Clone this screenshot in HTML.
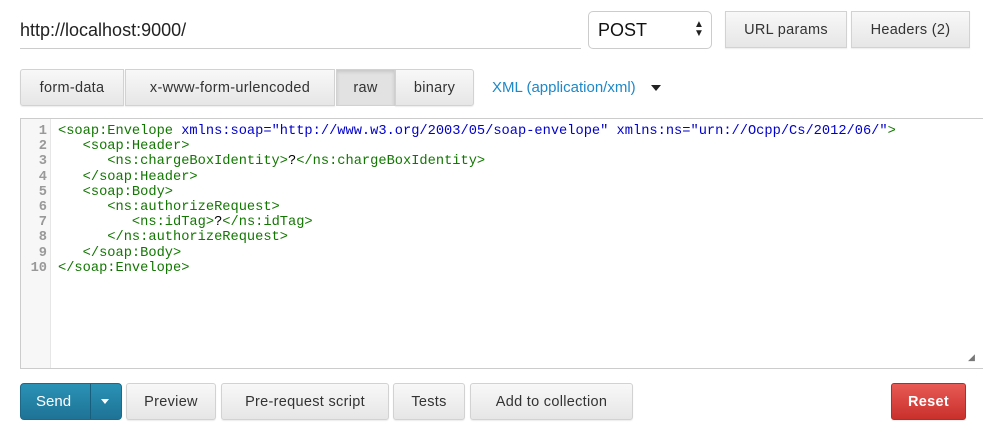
<!DOCTYPE html>
<html><head><meta charset="utf-8"><style>
*{box-sizing:border-box}
body{margin:0;width:983px;height:431px;background:#fff;font-family:"Liberation Sans",sans-serif;position:relative;overflow:hidden}
.a{position:absolute}
.btn{position:absolute;background:linear-gradient(#f8f8f8,#e6e6e6);border:1px solid #d2d2d2;border-radius:3px;color:#333;font-size:14.5px;display:flex;align-items:center;justify-content:center;letter-spacing:0.3px;box-shadow:0 1px 1px rgba(0,0,0,.08)}
.code{position:absolute;left:58px;top:124px;font-family:"Liberation Mono",monospace;font-size:13.7px;line-height:15.2px;white-space:pre;color:#170}
.g{position:absolute;left:20px;width:31px;top:124px;font-family:"Liberation Mono",monospace;font-size:13.7px;line-height:15.2px;color:#999;font-weight:bold;text-align:right;padding-right:4px;white-space:pre}
.b{color:#00c}.k{color:#000}
</style></head><body>
<div class="a" style="left:20px;top:20px;font-size:18px;color:#222">http://localhost:9000/</div>
<div class="a" style="left:20px;top:48px;width:561px;height:1px;background:#ccc"></div>
<div class="a" style="left:588px;top:11px;width:124px;height:38px;border:1px solid #ccc;border-radius:5px"></div>
<div class="a" style="left:598px;top:20px;font-size:18px;color:#111">POST</div>
<div class="a" style="left:694px;top:20px;font-size:10px;line-height:9px;color:#222">▲<br>▼</div>
<div class="btn" style="left:725px;top:11px;width:122px;height:37px;border-radius:0">URL params</div>
<div class="btn" style="left:851px;top:11px;width:119px;height:37px;border-radius:0">Headers (2)</div>

<div class="btn" style="left:20px;top:69px;width:104px;height:37px;border-radius:3px 0 0 3px">form-data</div>
<div class="btn" style="left:125px;top:69px;width:210px;height:37px;border-radius:0">x-www-form-urlencoded</div>
<div class="btn" style="left:336px;top:69px;width:59px;height:37px;border-radius:0;background:#e2e2e2;box-shadow:inset 0 2px 3px rgba(0,0,0,.12)">raw</div>
<div class="btn" style="left:395px;top:69px;width:79px;height:37px;border-radius:0 3px 3px 0">binary</div>
<div class="a" style="left:492px;top:79px;font-size:15px;color:#1e88c8">XML (application/xml)</div>
<div class="a" style="left:651px;top:85px;width:0;height:0;border-left:5px solid transparent;border-right:5px solid transparent;border-top:6px solid #222"></div>

<div class="a" style="left:20px;top:118px;width:963px;height:251px;border:1px solid #ccc;border-right:none"></div>
<div class="a" style="left:21px;top:119px;width:30px;height:249px;background:#f7f7f7;border-right:1px solid #e6e6e6"></div>
<div class="g">1
2
3
4
5
6
7
8
9
10</div>
<div class="code">&lt;soap:Envelope <span class="b">xmlns:soap="http://www.w3.org/2003/05/soap-envelope" xmlns:ns="urn://Ocpp/Cs/2012/06/"</span>&gt;
   &lt;soap:Header&gt;
      &lt;ns:chargeBoxIdentity&gt;<span class="k">?</span>&lt;/ns:chargeBoxIdentity&gt;
   &lt;/soap:Header&gt;
   &lt;soap:Body&gt;
      &lt;ns:authorizeRequest&gt;
         &lt;ns:idTag&gt;<span class="k">?</span>&lt;/ns:idTag&gt;
      &lt;/ns:authorizeRequest&gt;
   &lt;/soap:Body&gt;
&lt;/soap:Envelope&gt;</div>
<div class="a" style="left:968px;top:352px;font-size:9px;color:#777">◢</div>

<div class="a" style="left:20px;top:383px;width:102px;height:37px;border-radius:4px;background:linear-gradient(#2a92b6,#1e7396);border:1px solid #1b6a8a"></div>
<div class="a" style="left:90px;top:384px;width:1px;height:35px;background:#175f7c"></div>
<div class="a" style="left:36px;top:393px;font-size:15px;color:#fff">Send</div>
<div class="a" style="left:101px;top:399px;width:0;height:0;border-left:4px solid transparent;border-right:4px solid transparent;border-top:5px solid #fff"></div>
<div class="btn" style="left:126px;top:383px;width:90px;height:37px">Preview</div>
<div class="btn" style="left:221px;top:383px;width:168px;height:37px">Pre-request script</div>
<div class="btn" style="left:393px;top:383px;width:72px;height:37px">Tests</div>
<div class="btn" style="left:470px;top:383px;width:163px;height:37px">Add to collection</div>
<div class="btn" style="left:891px;top:383px;width:75px;height:37px;background:linear-gradient(#e85a55,#c9302c);border-color:#b52b27;color:#fff;font-weight:bold">Reset</div>
</body></html>
